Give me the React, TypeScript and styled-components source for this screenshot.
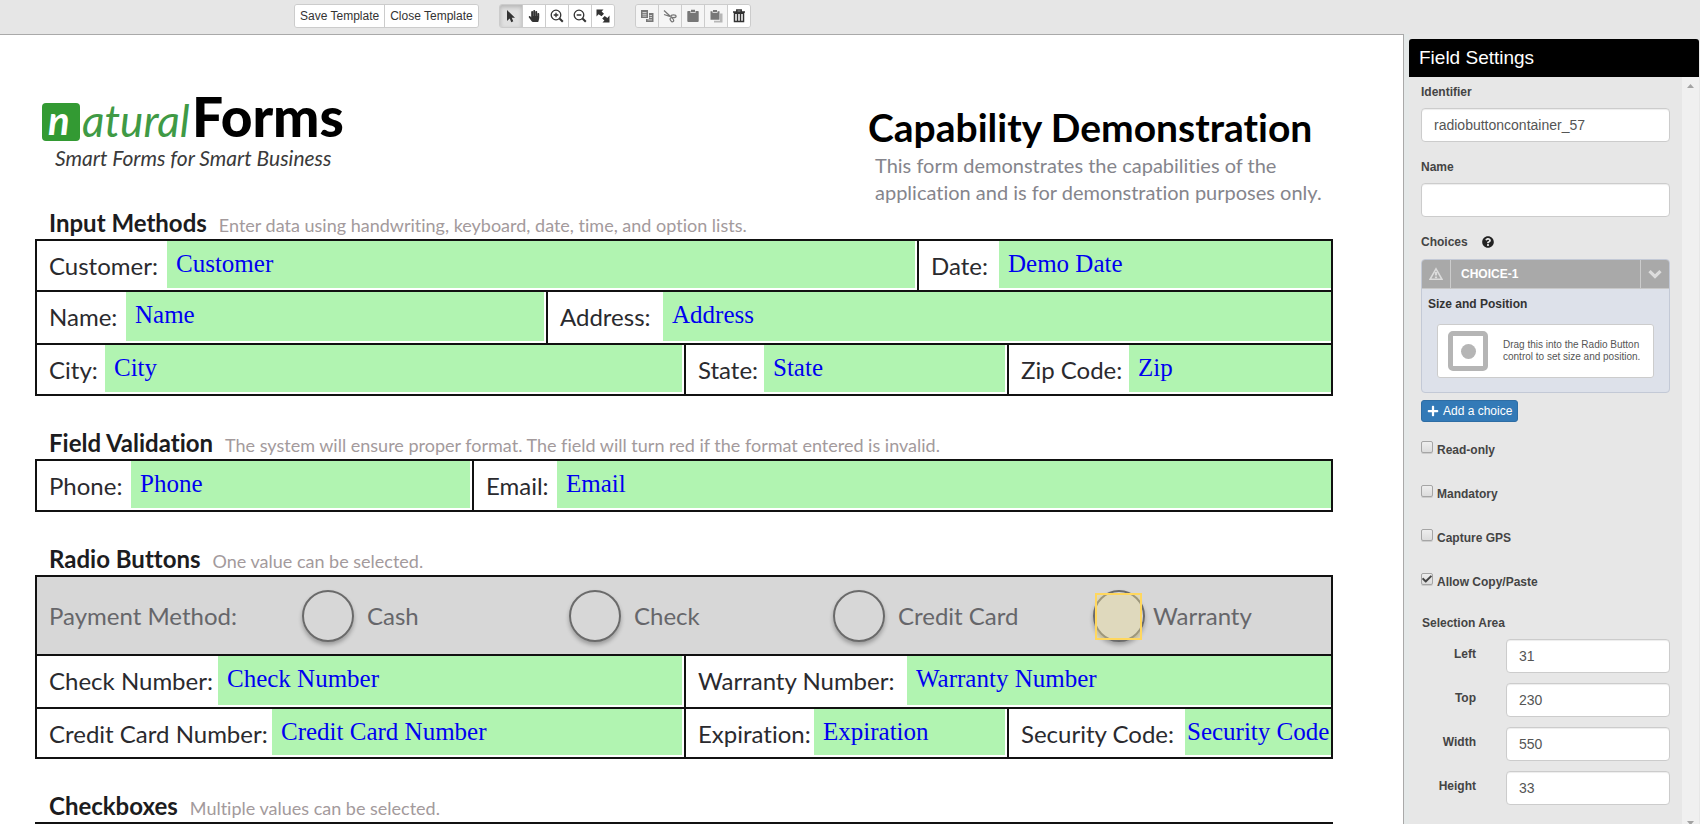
import React from "react";
import styled, { createGlobalStyle, css } from "styled-components";
import { FaCheck, FaHandPaper, FaPlus, FaQuestionCircle } from "react-icons/fa";

const GlobalStyle = createGlobalStyle`
  * { box-sizing: border-box; }
  body {
    margin: 0;
    background: #e6e6e6;
    color: #333;
    font-family: "Liberation Sans", Arial, sans-serif;
    font-size: 12px;
  }
`;

const Page = styled.div`
  display: flex;
  flex-direction: column;
  height: 100vh;
  overflow: hidden;
`;

/* ---------- toolbar ---------- */

const Toolbar = styled.div`
  display: flex;
  gap: 20px;
  flex: none;
  height: 34px;
  padding: 4px 0 0 294px;
`;

const ButtonGroup = styled.div`
  display: flex;
  height: 24px;
  border: 1px solid #ccc;
  border-radius: 3px;
  overflow: hidden;
`;

const ToolButton = styled.button<{ $active?: boolean; $icon?: boolean }>`
  display: flex;
  align-items: center;
  justify-content: center;
  width: ${(p) => (p.$icon ? "23px" : "auto")};
  padding: 0 ${(p) => (p.$icon ? "0" : "5px")};
  border: 0;
  background: ${(p) => (p.$active ? "#e0e0e0" : "#fff")};
  box-shadow: ${(p) => (p.$active ? "inset 0 2px 4px rgba(0,0,0,.2)" : "none")};
  color: #333;
  font: 12px/18px "Liberation Sans", Arial, sans-serif;
  white-space: nowrap;
  & + & { border-left: 1px solid #ccc; }
  &:first-child { width: ${(p) => (p.$icon ? "22px" : "auto")}; }
  &:disabled { background: #f5f5f5; color: #777; }
`;

/* ---------- document ---------- */

const Workspace = styled.div`
  display: flex;
  flex: 1;
  min-height: 0;
`;

const Sheet = styled.main`
  flex: 1;
  min-width: 0;
  overflow: auto;
  scrollbar-width: none;
  padding: 44px 70px 0 35px;
  border: solid #a9a9a9;
  border-width: 1px 1px 0 0;
  background: #fff;
  font-family: Lato, Carlito, Calibri, sans-serif;
  font-variant-ligatures: none;
`;

const SheetHeader = styled.header`
  display: flex;
  justify-content: space-between;
  height: 130px;
`;

const Logo = styled.svg`
  display: block;
  flex: none;
`;

const TitleBlock = styled.div`
  width: 465px;
  padding-top: 24px;
`;

const Title = styled.h1`
  margin: 0;
  color: #000;
  font-size: 39px;
  line-height: 49px;
  font-weight: 700;
  white-space: nowrap;
`;

const Subtitle = styled.p`
  margin: 0 0 0 7px;
  color: #85858c;
  font-size: 20px;
  line-height: 27px;
  white-space: nowrap;
`;

const Section = styled.section`
  margin-bottom: 33px;
`;

const SectionHead = styled.div`
  display: flex;
  align-items: baseline;
  gap: 12px;
  height: 30px;
  padding-left: 14px;
`;

const SectionTitle = styled.h2`
  margin: 0;
  color: #1c1c20;
  font-size: 24px;
  line-height: 28px;
  font-weight: 700;
  white-space: nowrap;
`;

const SectionNote = styled.span`
  color: #a39a9c;
  font-size: 18px;
  white-space: nowrap;
`;

const FormBox = styled.div`
  border: 2px solid #111;
`;

const FormRow = styled.div<{ $columns: string; $height: number }>`
  display: grid;
  grid-template-columns: ${(p) => p.$columns};
  min-height: ${(p) => p.$height}px;
  & + & { border-top: 2px solid #111; }
`;

const Cell = styled.div`
  display: flex;
  min-width: 0;
  & + & { border-left: 2px solid #111; }
`;

const CellLabel = styled.span<{ $width: number }>`
  flex: none;
  width: ${(p) => p.$width}px;
  padding: 11px 0 0 12px;
  color: #2a2a2e;
  font-size: 24px;
  line-height: 28px;
  white-space: nowrap;
`;

const Field = styled.div<{ $tight?: boolean }>`
  flex: 1;
  min-width: 0;
  margin: 0 0 2px;
  padding: 9px 0 0 ${(p) => (p.$tight ? 2 : 9)}px;
  background: #b1f4b1;
  color: #0000f0;
  font: 25px/28px "Liberation Serif", "Times New Roman", serif;
  white-space: nowrap;
  ${Cell}:not(:last-child) > & { margin-right: 2px; }
`;

const RadioRow = styled.div`
  display: grid;
  grid-template-columns: 265fr 267fr 264fr 260fr 238fr;
  align-items: center;
  height: 77px;
  background: #d7d7d7;
  color: #66666a;
  font-size: 24px;
  line-height: 28px;
  white-space: nowrap;
  & + ${FormRow} { border-top: 2px solid #111; }
`;

const RadioCaption = styled.span`
  padding-left: 12px;
`;

const RadioOption = styled.label<{ $selected: boolean }>`
  position: relative;
  display: flex;
  align-items: center;
  gap: ${(p) => (p.$selected ? 8 : 13)}px;
`;

const RadioCircle = styled.input`
  appearance: none;
  flex: none;
  width: 52px;
  height: 52px;
  margin: 0;
  border: 2px solid #6a6a6a;
  border-radius: 50%;
  box-shadow: 0 3px 4px rgba(0, 0, 0, 0.28);
`;

const SelectionBox = styled.div`
  position: absolute;
  left: 2px;
  top: 3px;
  width: 47px;
  height: 47px;
  border: 2px solid #ffd75e;
  background: rgba(236, 220, 150, 0.4);
`;

/* ---------- settings panel ---------- */

const Side = styled.aside`
  display: flex;
  flex-direction: column;
  flex: none;
  width: 296px;
  padding: 5px 1px 0 5px;
  background: linear-gradient(90deg, #e4e8e8 5px, #e7e7e7 5px);
`;

const SideTitle = styled.h2`
  flex: none;
  height: 38px;
  margin: 0;
  padding-left: 10px;
  border-radius: 3px 3px 0 0;
  background: #000;
  color: #fff;
  font-size: 19px;
  line-height: 37px;
  font-weight: 400;
`;

const SideBody = styled.div`
  display: flex;
  flex: 1;
  min-height: 0;
`;

const Settings = styled.div`
  flex: 1;
  min-width: 0;
  overflow: auto;
  scrollbar-width: none;
  padding: 6px 12px 0;
`;

const ScrollTrack = styled.div`
  display: flex;
  flex-direction: column;
  align-items: center;
  justify-content: space-between;
  width: 17px;
  padding-top: 7px;
  background: #f0f0f0;
`;

const labelText = css`
  color: #444;
  font-size: 12px;
  line-height: 18px;
  font-weight: 700;
`;

const FieldLabel = styled.label`
  ${labelText}
  display: flex;
  align-items: center;
  gap: 14px;
  margin-bottom: 7px;
`;

const TextInput = styled.input`
  display: block;
  width: 100%;
  height: 34px;
  margin: 0;
  padding: 0 12px;
  border: 1px solid #ccc;
  border-radius: 4px;
  background: #fff;
  box-shadow: inset 0 1px 1px rgba(0, 0, 0, 0.075);
  color: #555;
  font: 14px/20px "Liberation Sans", Arial, sans-serif;
`;

const FieldGroup = styled.div`
  margin-bottom: 16px;
`;

const Choice = styled.div`
  margin-top: 8px;
  border: 1px solid #c3c9d6;
  border-radius: 4px;
  overflow: hidden;
  background: #dde1ea;
`;

const ChoiceHead = styled.div`
  display: grid;
  grid-template-columns: 28px 1fr 28px;
  height: 29px;
  background: #a9a9a9;
  color: #dcdcdc;
  border-bottom: 1px solid #c8c8c8;
`;

const ChoiceButton = styled.button`
  display: flex;
  align-items: center;
  justify-content: center;
  padding: 0;
  border: 0;
  background: none;
  color: inherit;
`;

const ChoiceName = styled.span`
  padding-left: 10px;
  border: solid #ccc;
  border-width: 0 1px;
  color: #fff;
  font-weight: 700;
  line-height: 28px;
`;

const ChoiceBody = styled.div`
  padding: 6px 15px 14px;
`;

const ChoiceCaption = styled.div`
  color: #333;
  font-weight: 700;
  line-height: 18px;
  margin: 0 0 11px -9px;
`;

const DragCard = styled.div`
  display: flex;
  align-items: center;
  gap: 15px;
  height: 54px;
  padding-left: 10px;
  border: 1px solid #ccc;
  border-radius: 3px;
  background: #fff;
  color: #555;
  font-size: 10px;
  line-height: 12px;
  white-space: nowrap;
`;

const RadioHandle = styled.div`
  display: grid;
  place-items: center;
  width: 40px;
  height: 40px;
  border: 5px solid #b5b5b5;
  border-radius: 5px;
  &::after {
    content: "";
    width: 15px;
    height: 15px;
    border-radius: 50%;
    background: #b5b5b5;
  }
`;

const AddButton = styled.button`
  display: flex;
  align-items: center;
  gap: 4px;
  height: 22px;
  margin: 7px 0 19px;
  padding: 0 5px;
  border: 1px solid #2e6da4;
  border-radius: 3px;
  background: #337ab7;
  color: #fff;
  font: 12px/18px "Liberation Sans", Arial, sans-serif;
  white-space: nowrap;
`;

const CheckRow = styled.label`
  ${labelText}
  display: flex;
  gap: 4px;
  height: 44px;
`;

const CheckBoxWrap = styled.span`
  position: relative;
  width: 12px;
  height: 13px;
  svg {
    position: absolute;
    left: 1px;
    top: 1px;
    pointer-events: none;
  }
`;

const CheckInput = styled.input`
  appearance: none;
  display: block;
  width: 12px;
  height: 12px;
  margin: 0;
  border: 1px solid #a5a5a5;
  border-radius: 2px;
  background: linear-gradient(#eee, #dcdcdc);
  box-shadow: 0 1px 0 #ccc;
`;

const AreaTitle = styled.div`
  ${labelText}
  margin: -3px 0 7px 1px;
`;

const AreaRow = styled.div`
  display: grid;
  grid-template-columns: 55px 1fr;
  column-gap: 30px;
  margin-bottom: 10px;
`;

const AreaLabel = styled.label`
  ${labelText}
  padding-top: 6px;
  text-align: right;
`;

/* ---------- icons ---------- */

const Icon = ({ children }: { children: React.ReactNode }) => (
  <svg width="14" height="14" viewBox="0 0 14 14" fill="currentColor" aria-hidden="true">
    {children}
  </svg>
);

const PointerIcon = () => (
  <Icon><path d="M3 1v11l2.700-2.400 1.600 3.600 2-.9-1.600-3.500H11z" /></Icon>
);
const ZoomIcon = ({ plus }: { plus?: boolean }) => (
  <Icon>
    <circle cx="6" cy="6" r="4.800" fill="none" stroke="currentColor" strokeWidth="1.300" />
    <path d="M9.500 9.500l3.300 3.300" stroke="currentColor" strokeWidth="2" />
    <path d={plus ? "M3.700 6h4.600M6 3.700v4.600" : "M3.700 6h4.600"} stroke="currentColor" strokeWidth="1.300" />
  </Icon>
);
const ResizeIcon = () => (
  <Icon>
    <path d="M.5.5h7L5.600 2.400l2.400 2.400-2.500 2.400-2.900-2L.5 7.500z" />
    <path d="M13.500 13.500h-7l1.900-1.900-2.200-2.200 2.500-2.500 2.700 2 2.100-2.400z" />
  </Icon>
);
const CopyIcon = () => (
  <Icon>
    <path d="M1 1h7v8H1z" />
    <path d="M9 4h4.500v9H6v-3h3z" />
    <path d="M2.500 3.500h4M2.500 5.300h4M2.500 7.100h4M9.500 6.500H12M9.500 8.500H12M7.500 10.900H12" stroke="#f5f5f5" strokeWidth=".7" />
  </Icon>
);
const ScissorsIcon = () => (
  <Icon>
    <path d="M1 1.500l6.500 6M1 5.500l6.500 2.200" stroke="currentColor" strokeWidth="1.300" />
    <ellipse cx="10.500" cy="7.300" rx="2.600" ry="1.400" fill="none" stroke="currentColor" strokeWidth="1.200" />
    <ellipse cx="8.900" cy="10.800" rx="1.400" ry="2.200" transform="rotate(-35 8.900 10.800)" fill="none" stroke="currentColor" strokeWidth="1.200" />
  </Icon>
);
const PasteIcon = () => (
  <Icon>
    <path d="M2 2h2.500v2h5V2H12a.7.7 0 01.7.7V12a1 1 0 01-1 1H2.300a1 1 0 01-1-1V2.700A.7.7 0 012 2z" />
    <path d="M5 .8h4v2.500H5z" />
  </Icon>
);
const PasteAllIcon = () => (
  <Icon>
    <path d="M11 4.500h2.500v9H5v-1.800h6z" opacity=".5" />
    <path d="M1.500 2.200h2v1.500h5V2.200h2v8.600h-9z" />
    <path d="M4 1h4v2H4z" />
  </Icon>
);
const TrashIcon = () => (
  <Icon>
    <path d="M4.800 2.300V1h4.400v1.300M1 2.900h12M2.500 4.200h9v8.200h-9zM5.500 4.500v7.500M8.500 4.500v7.500" fill="none" stroke="currentColor" strokeWidth="1.500" />
  </Icon>
);
const WarningIcon = () => (
  <Icon>
    <path d="M7 1.800L13 12.300H1z" fill="none" stroke="currentColor" strokeWidth="1.600" />
    <path d="M7 5v3.500M7 9.500v1.700" stroke="currentColor" strokeWidth="2.200" />
  </Icon>
);
const ChevronIcon = () => (
  <Icon><path d="M1.500 4.200L7 9.500l5.500-5.300" fill="none" stroke="currentColor" strokeWidth="3.200" /></Icon>
);

const LogoMark = () => (
  <Logo width="320" height="98" viewBox="0 0 320 98" role="img" aria-label="naturalForms">
    <rect x="7" y="24" width="38" height="38" rx="4" fill="#339a33" />
    <text x="13" y="56" fill="#fff" fontSize="40" fontStyle="italic" fontWeight="700">n</text>
    <text x="47" y="58" fill="#3f9a45" fontSize="44" fontStyle="italic">atural</text>
    <text x="157" y="58" fill="#000" fontSize="55" fontWeight="900">Forms</text>
    <text x="20" y="87" fill="#3a3a3a" fontSize="21" fontStyle="italic">Smart Forms for Smart Business</text>
  </Logo>
);

/* ---------- content ---------- */

type CellData = { label: string; value: string; labelWidth: number; tight?: boolean };

const Row = ({ columns, height, cells }: { columns: string; height: number; cells: CellData[] }) => (
  <FormRow $columns={columns} $height={height}>
    {cells.map((c) => (
      <Cell key={c.label}>
        <CellLabel $width={c.labelWidth}>{c.label}</CellLabel>
        <Field $tight={c.tight}>{c.value}</Field>
      </Cell>
    ))}
  </FormRow>
);

const Heading = ({ title, note }: { title: string; note: string }) => (
  <SectionHead>
    <SectionTitle>{title}</SectionTitle>
    <SectionNote>{note}</SectionNote>
  </SectionHead>
);

const payments = ["Cash", "Check", "Credit Card", "Warranty"];
const checks = [
  { label: "Read-only", on: false },
  { label: "Mandatory", on: false },
  { label: "Capture GPS", on: false },
  { label: "Allow Copy/Paste", on: true },
];
const area = [
  ["Left", "31"],
  ["Top", "230"],
  ["Width", "550"],
  ["Height", "33"],
];

export default function App() {
  return (
    <Page>
      <GlobalStyle />
      <Toolbar>
        <ButtonGroup>
          <ToolButton>Save Template</ToolButton>
          <ToolButton>Close Template</ToolButton>
        </ButtonGroup>
        <ButtonGroup>
          <ToolButton $icon $active aria-label="Select"><PointerIcon /></ToolButton>
          <ToolButton $icon aria-label="Pan"><FaHandPaper size={12} /></ToolButton>
          <ToolButton $icon aria-label="Zoom in"><ZoomIcon plus /></ToolButton>
          <ToolButton $icon aria-label="Zoom out"><ZoomIcon /></ToolButton>
          <ToolButton $icon aria-label="Fit to window"><ResizeIcon /></ToolButton>
        </ButtonGroup>
        <ButtonGroup>
          <ToolButton $icon disabled aria-label="Copy"><CopyIcon /></ToolButton>
          <ToolButton $icon disabled aria-label="Cut"><ScissorsIcon /></ToolButton>
          <ToolButton $icon disabled aria-label="Paste"><PasteIcon /></ToolButton>
          <ToolButton $icon disabled aria-label="Paste all"><PasteAllIcon /></ToolButton>
          <ToolButton $icon aria-label="Delete"><TrashIcon /></ToolButton>
        </ButtonGroup>
      </Toolbar>

      <Workspace>
        <Sheet>
          <SheetHeader>
            <LogoMark />
            <TitleBlock>
              <Title>Capability Demonstration</Title>
              <Subtitle>This form demonstrates the capabilities of the<br />application and is for demonstration purposes only.</Subtitle>
            </TitleBlock>
          </SheetHeader>

          <Section>
            <Heading title="Input Methods" note="Enter data using handwriting, keyboard, date, time, and option lists." />
            <FormBox>
              <Row columns="880fr 414fr" height={49} cells={[
                { label: "Customer:", value: "Customer", labelWidth: 130 },
                { label: "Date:", value: "Demo Date", labelWidth: 80 },
              ]} />
              <Row columns="509fr 785fr" height={53} cells={[
                { label: "Name:", value: "Name", labelWidth: 89 },
                { label: "Address:", value: "Address", labelWidth: 115 },
              ]} />
              <Row columns="647fr 323fr 324fr" height={51} cells={[
                { label: "City:", value: "City", labelWidth: 68 },
                { label: "State:", value: "State", labelWidth: 78 },
                { label: "Zip Code:", value: "Zip", labelWidth: 120 },
              ]} />
            </FormBox>
          </Section>

          <Section>
            <Heading title="Field Validation" note="The system will ensure proper format. The field will turn red if the format entered is invalid." />
            <FormBox>
              <Row columns="435fr 859fr" height={49} cells={[
                { label: "Phone:", value: "Phone", labelWidth: 94 },
                { label: "Email:", value: "Email", labelWidth: 83 },
              ]} />
            </FormBox>
          </Section>

          <Section>
            <Heading title="Radio Buttons" note="One value can be selected." />
            <FormBox>
              <RadioRow>
                <RadioCaption>Payment Method:</RadioCaption>
                {payments.map((p) => (
                  <RadioOption key={p} $selected={p === "Warranty"}>
                    <RadioCircle type="radio" name="payment" />
                    {p}
                    {p === "Warranty" && <SelectionBox />}
                  </RadioOption>
                ))}
              </RadioRow>
              <Row columns="647fr 647fr" height={53} cells={[
                { label: "Check Number:", value: "Check Number", labelWidth: 181 },
                { label: "Warranty Number:", value: "Warranty Number", labelWidth: 221 },
              ]} />
              <Row columns="647fr 323fr 324fr" height={50} cells={[
                { label: "Credit Card Number:", value: "Credit Card Number", labelWidth: 235 },
                { label: "Expiration:", value: "Expiration", labelWidth: 128 },
                { label: "Security Code:", value: "Security Code", labelWidth: 176, tight: true },
              ]} />
            </FormBox>
          </Section>

          <Section>
            <Heading title="Checkboxes" note="Multiple values can be selected." />
            <FormBox />
          </Section>
        </Sheet>

        <Side>
          <SideTitle>Field Settings</SideTitle>
          <SideBody>
            <Settings>
              <FieldGroup>
                <FieldLabel htmlFor="identifier">Identifier</FieldLabel>
                <TextInput id="identifier" defaultValue="radiobuttoncontainer_57" />
              </FieldGroup>
              <FieldGroup>
                <FieldLabel htmlFor="name">Name</FieldLabel>
                <TextInput id="name" />
              </FieldGroup>
              <FieldLabel as="div">Choices <FaQuestionCircle size={12} color="#222" /></FieldLabel>
              <Choice>
                <ChoiceHead>
                  <ChoiceButton aria-label="Choice warning"><WarningIcon /></ChoiceButton>
                  <ChoiceName>CHOICE-1</ChoiceName>
                  <ChoiceButton aria-label="Collapse choice"><ChevronIcon /></ChoiceButton>
                </ChoiceHead>
                <ChoiceBody>
                  <ChoiceCaption>Size and Position</ChoiceCaption>
                  <DragCard>
                    <RadioHandle />
                    <span>Drag this into the Radio Button<br />control to set size and position.</span>
                  </DragCard>
                </ChoiceBody>
              </Choice>
              <AddButton><FaPlus size={12} />Add a choice</AddButton>
              {checks.map((c) => (
                <CheckRow key={c.label}>
                  <CheckBoxWrap>
                    <CheckInput type="checkbox" defaultChecked={c.on} />
                    {c.on && <FaCheck size={10} />}
                  </CheckBoxWrap>
                  <span>{c.label}</span>
                </CheckRow>
              ))}
              <AreaTitle>Selection Area</AreaTitle>
              {area.map(([label, value]) => (
                <AreaRow key={label}>
                  <AreaLabel htmlFor={label}>{label}</AreaLabel>
                  <TextInput id={label} defaultValue={value} />
                </AreaRow>
              ))}
            </Settings>
            <ScrollTrack>
              <svg width="7" height="4" viewBox="0 0 7 4"><path d="M0 4L3.500 0 7 4z" fill="#a3a3a3" /></svg>
              <svg width="7" height="3" viewBox="0 0 7 3"><path d="M0 0h7L4.500 3h-2z" fill="#a3a3a3" /></svg>
            </ScrollTrack>
          </SideBody>
        </Side>
      </Workspace>
    </Page>
  );
}
